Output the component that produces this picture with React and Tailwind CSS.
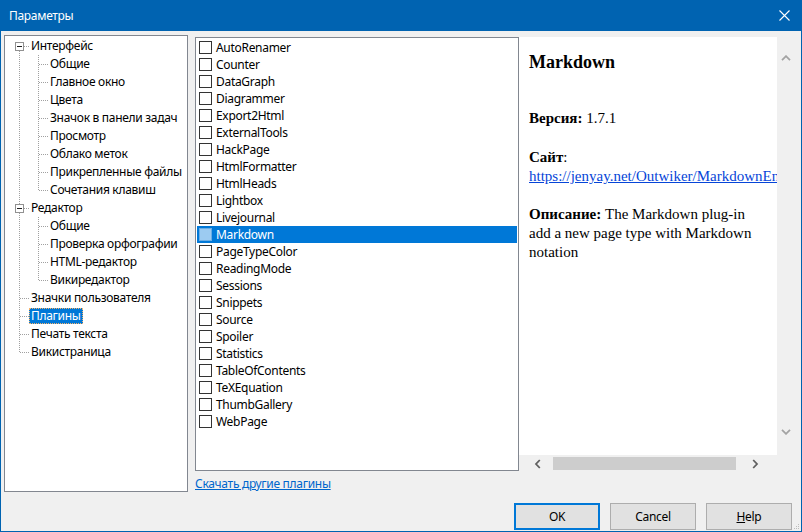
import React from "react";

const TL = "#a0a0a0";

function Cell({ kind }) {
  const dash = { stroke: TL, strokeDasharray: "1 1", strokeWidth: 1 };
  return (
    <svg width="19" height="18" className="shrink-0" shapeRendering="crispEdges">
      {(kind === "pipe" || kind === "tee") && <line x1="9.5" y1="0" x2="9.5" y2="18" {...dash} />}
      {kind === "elbow" && <line x1="9.5" y1="0" x2="9.5" y2="10" {...dash} />}
      {(kind === "tee" || kind === "elbow") && <line x1="10" y1="9.5" x2="19" y2="9.5" {...dash} />}
      {(kind === "boxFirst" || kind === "boxMid") && (
        <>
          {kind === "boxMid" && <line x1="9.5" y1="0" x2="9.5" y2="5" {...dash} />}
          <line x1="9.5" y1="14" x2="9.5" y2="18" {...dash} />
          <line x1="14" y1="9.5" x2="19" y2="9.5" {...dash} />
          <rect x="5.5" y="5.5" width="8" height="8" fill="#ffffff" stroke="#919191" />
          <line x1="7" y1="9.5" x2="12" y2="9.5" stroke="#1f1f1f" />
        </>
      )}
    </svg>
  );
}

const tree = [
  { t: "Интерфейс", c: ["boxFirst"] },
  { t: "Общие", c: ["pipe", "tee"] },
  { t: "Главное окно", c: ["pipe", "tee"] },
  { t: "Цвета", c: ["pipe", "tee"] },
  { t: "Значок в панели задач", c: ["pipe", "tee"] },
  { t: "Просмотр", c: ["pipe", "tee"] },
  { t: "Облако меток", c: ["pipe", "tee"] },
  { t: "Прикрепленные файлы", c: ["pipe", "tee"] },
  { t: "Сочетания клавиш", c: ["pipe", "elbow"] },
  { t: "Редактор", c: ["boxMid"] },
  { t: "Общие", c: ["pipe", "tee"] },
  { t: "Проверка орфографии", c: ["pipe", "tee"] },
  { t: "HTML-редактор", c: ["pipe", "tee"] },
  { t: "Викиредактор", c: ["pipe", "elbow"] },
  { t: "Значки пользователя", c: ["tee"] },
  { t: "Плагины", c: ["tee"], sel: true },
  { t: "Печать текста", c: ["tee"] },
  { t: "Викистраница", c: ["elbow"] },
];

const plugins = [
  "AutoRenamer", "Counter", "DataGraph", "Diagrammer", "Export2Html", "ExternalTools",
  "HackPage", "HtmlFormatter", "HtmlHeads", "Lightbox", "Livejournal", "Markdown",
  "PageTypeColor", "ReadingMode", "Sessions", "Snippets", "Source", "Spoiler",
  "Statistics", "TableOfContents", "TeXEquation", "ThumbGallery", "WebPage",
];

export default function App() {
  return (
    <div className="w-[802px] h-[532px] bg-[#0063b1] px-[1px] pb-[1px] flex flex-col font-['Noto_Sans',sans-serif] text-[12px] tracking-[-0.3px] text-black overflow-hidden">
      {/* Title bar */}
      <div className="h-[31px] shrink-0 flex items-center justify-between pl-[8px] pr-[11px] text-white">
        <span className="leading-[16px]">Параметры</span>
        <svg width="11" height="11" viewBox="0 0 11 11">
          <path d="M0.5 0.5 L10.5 10.5 M10.5 0.5 L0.5 10.5" stroke="#ffffff" strokeWidth="1.1" />
        </svg>
      </div>

      {/* Body */}
      <div className="relative flex-1 bg-[#f0f0f0] flex flex-col">
        <div className="flex items-start pt-[4px] pl-[3px]">
          {/* Tree panel */}
          <div className="w-[184px] h-[457px] shrink-0 bg-white border border-[#828790] pt-[1px] pl-[5px]">
            {tree.map((r, i) => (
              <div key={i} className="flex items-center h-[18px]">
                {r.c.map((k, j) => (
                  <Cell key={j} kind={k} />
                ))}
                <span
                  className={
                    "px-[2px] h-[16px] leading-[16px] whitespace-nowrap " +
                    (r.sel
                      ? "bg-[#0078d7] text-white outline outline-1 outline-dotted outline-[#f7b36b] -outline-offset-1"
                      : "")
                  }
                >
                  {r.t}
                </span>
              </div>
            ))}
          </div>

          {/* Plugins list column */}
          <div className="ml-[7px] mt-[2px] w-[324px] shrink-0 flex flex-col">
            <div className="h-[434px] bg-white border border-[#828790] pt-[1px]">
              {plugins.map((p) => {
                const sel = p === "Markdown";
                return (
                  <div
                    key={p}
                    className={
                      "flex items-center h-[17px] mx-[1px] pl-[2px] " +
                      (sel ? "bg-[#0078d7] text-white" : "")
                    }
                  >
                    <span
                      className={
                        "w-[13px] h-[13px] shrink-0 border " +
                        (sel ? "bg-[#9ccbf1] border-[#6aaee6]" : "bg-white border-[#333333]")
                      }
                    />
                    <span className="ml-[4px] leading-[16px] whitespace-nowrap">{p}</span>
                  </div>
                );
              })}
            </div>
            <div className="mt-[5px] leading-[16px]">
              <span className="text-[#0066cc] underline">Скачать другие плагины</span>
            </div>
          </div>

          {/* HTML info panel */}
          <div className="mt-[2px] w-[276px] shrink-0 flex flex-col">
            <div className="h-[418px] flex">
              <div className="w-[258px] bg-white overflow-hidden pl-[10px] font-['Liberation_Serif','Times_New_Roman',serif] text-[15px] leading-[19px] tracking-normal text-black whitespace-nowrap">
                <div className="mt-[14px] text-[18px] leading-[22px] font-bold">Markdown</div>
                <div className="mt-[36px]">
                  <b>Версия:</b> 1.7.1
                </div>
                <div className="mt-[20px]">
                  <b>Сайт</b>:
                </div>
                <div className="w-[248px] overflow-hidden">
                  <span className="text-[#0645d8] underline">https://jenyay.net/Outwiker/MarkdownEn</span>
                </div>
                <div className="mt-[19px]">
                  <b>Описание:</b> The Markdown plug-in
                  <br />
                  add a new page type with Markdown
                  <br />
                  notation
                </div>
              </div>
              <div className="w-[17px] bg-[#f0f0f0] flex flex-col items-center justify-between pt-[18px] pb-[20px]">
                <svg width="10" height="6" viewBox="0 0 10 6">
                  <path d="M1 5.2 L5 1.2 L9 5.2" fill="none" stroke="#a3a3a3" strokeWidth="1.8" />
                </svg>
                <svg width="10" height="6" viewBox="0 0 10 6">
                  <path d="M1 0.8 L5 4.8 L9 0.8" fill="none" stroke="#a3a3a3" strokeWidth="1.8" />
                </svg>
              </div>
            </div>
            <div className="h-[17px] flex">
              <div className="w-[258px] bg-[#f0f0f0] flex items-center">
                <svg className="ml-[15px]" width="8" height="10" viewBox="0 0 8 10">
                  <path d="M5.8 1 L2 5 L5.8 9" fill="none" stroke="#606060" strokeWidth="1.8" />
                </svg>
                <div className="ml-[11px] w-[183px] h-[13px] bg-[#cdcdcd]" />
                <svg className="ml-[15px]" width="8" height="10" viewBox="0 0 8 10">
                  <path d="M2.2 1 L6 5 L2.2 9" fill="none" stroke="#606060" strokeWidth="1.8" />
                </svg>
              </div>
              <div className="w-[17px] bg-[#f0f0f0]" />
            </div>
          </div>
        </div>

        {/* Buttons */}
        <div className="mt-[11px] flex justify-end gap-[10px] pr-[9px]">
          <div className="w-[86px] h-[27px] bg-[#e1e1e1] border-2 border-[#0078d7] flex items-center justify-center leading-[16px]">
            OK
          </div>
          <div className="w-[86px] h-[27px] bg-[#e1e1e1] border border-[#adadad] flex items-center justify-center leading-[16px]">
            Cancel
          </div>
          <div className="w-[86px] h-[27px] bg-[#e1e1e1] border border-[#adadad] flex items-center justify-center leading-[16px]">
            <span>
              <span className="underline">H</span>elp
            </span>
          </div>
        </div>

        {/* Resize grip */}
        <svg className="absolute right-[1px] bottom-[1px]" width="6" height="6" viewBox="0 0 6 6">
          <rect x="4" y="0" width="1" height="1" fill="#bcbcbc" />
          <rect x="2" y="2" width="1" height="1" fill="#bcbcbc" />
          <rect x="4" y="2" width="1" height="1" fill="#bcbcbc" />
          <rect x="0" y="4" width="1" height="1" fill="#bcbcbc" />
          <rect x="2" y="4" width="1" height="1" fill="#bcbcbc" />
          <rect x="4" y="4" width="1" height="1" fill="#bcbcbc" />
        </svg>
      </div>
    </div>
  );
}
